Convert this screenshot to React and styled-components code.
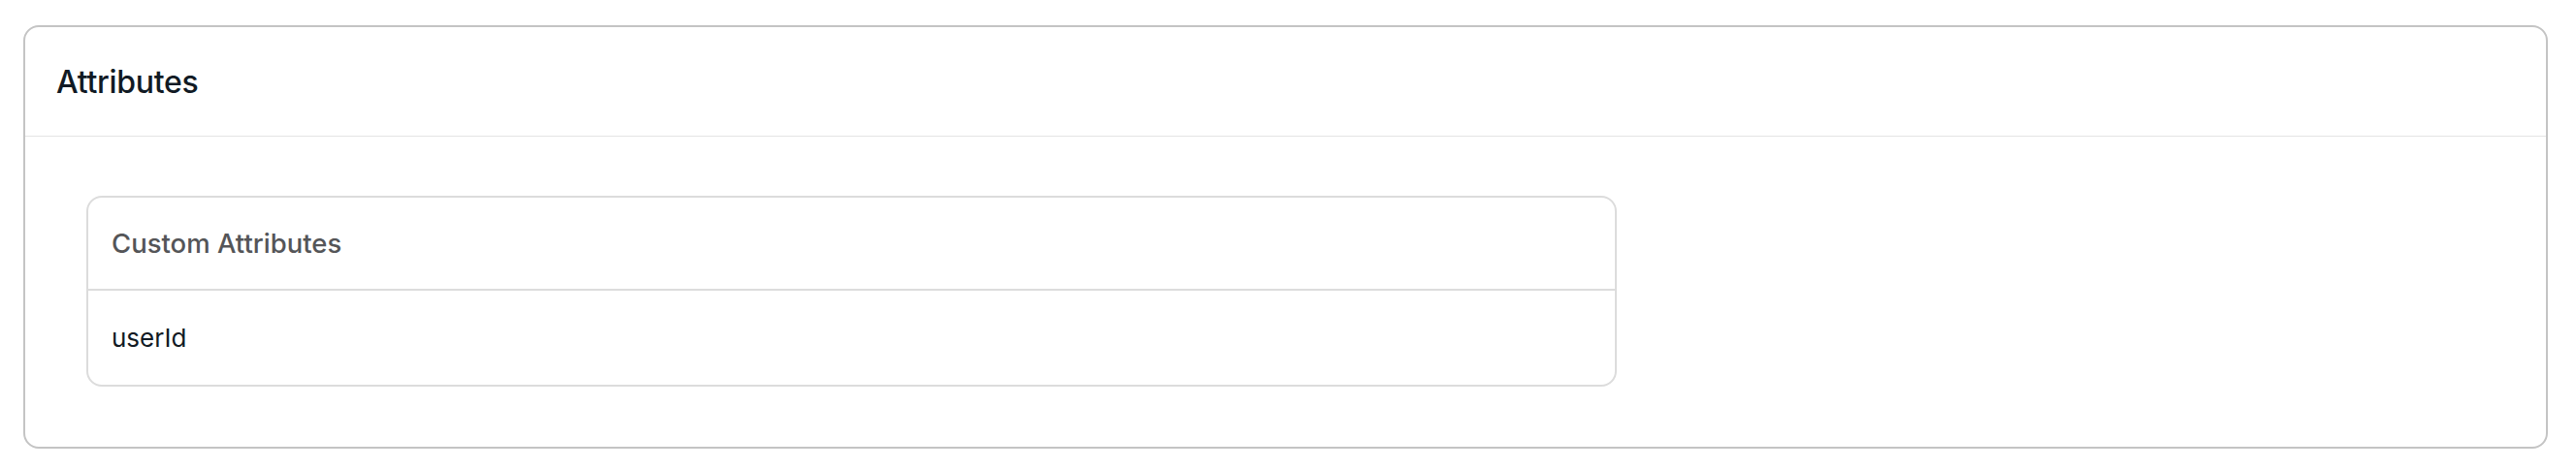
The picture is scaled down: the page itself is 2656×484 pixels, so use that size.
import React from "react";
import styled, { createGlobalStyle } from "styled-components";

const Global = createGlobalStyle`
  html, body { margin: 0; padding: 0; background: #ffffff; }
  body { font-family: Inter, "Noto Sans", sans-serif; -webkit-font-smoothing: antialiased; }
`;

const Page = styled.div`
  padding: 26px 29px 22px 24px;
`;

const Card = styled.section`
  border: 2px solid #c4c4c4;
  border-radius: 16px;
  background: #fff;
`;

const CardHeader = styled.header`
  height: 112px;
  display: flex;
  align-items: center;
  padding: 0 32px;
  border-bottom: 1px solid #e4e4e4;
`;

const Title = styled.h2`
  margin: 0;
  font-size: 32px;
  font-weight: 500;
  color: #111a24;
  letter-spacing: -0.3px;
`;

const CardBody = styled.div`
  padding: 61px 63px 62px 63px;
`;

const Table = styled.div`
  width: 1578px;
  box-sizing: border-box;
  border: 2px solid #dcdcdc;
  border-radius: 16px;
  overflow: hidden;
`;

const Row = styled.div`
  display: flex;
  align-items: center;
  padding: 0 24px;
  height: ${(p) => p.$h}px;
  border-top: ${(p) => (p.$divider ? "2px solid #dcdcdc" : "none")};
  font-size: ${(p) => (p.$head ? 27.5 : 26)}px;
  font-weight: ${(p) => (p.$head ? 500 : 400)};
  color: ${(p) => (p.$head ? "#545558" : "#111a24")};
`;

export default function App() {
  return (
    <>
      <Global />
      <Page>
        <Card>
          <CardHeader>
            <Title>Attributes</Title>
          </CardHeader>
          <CardBody>
            <Table>
              <Row $head $h={94}>Custom Attributes</Row>
              <Row $divider $h={97}>userId</Row>
            </Table>
          </CardBody>
        </Card>
      </Page>
    </>
  );
}
